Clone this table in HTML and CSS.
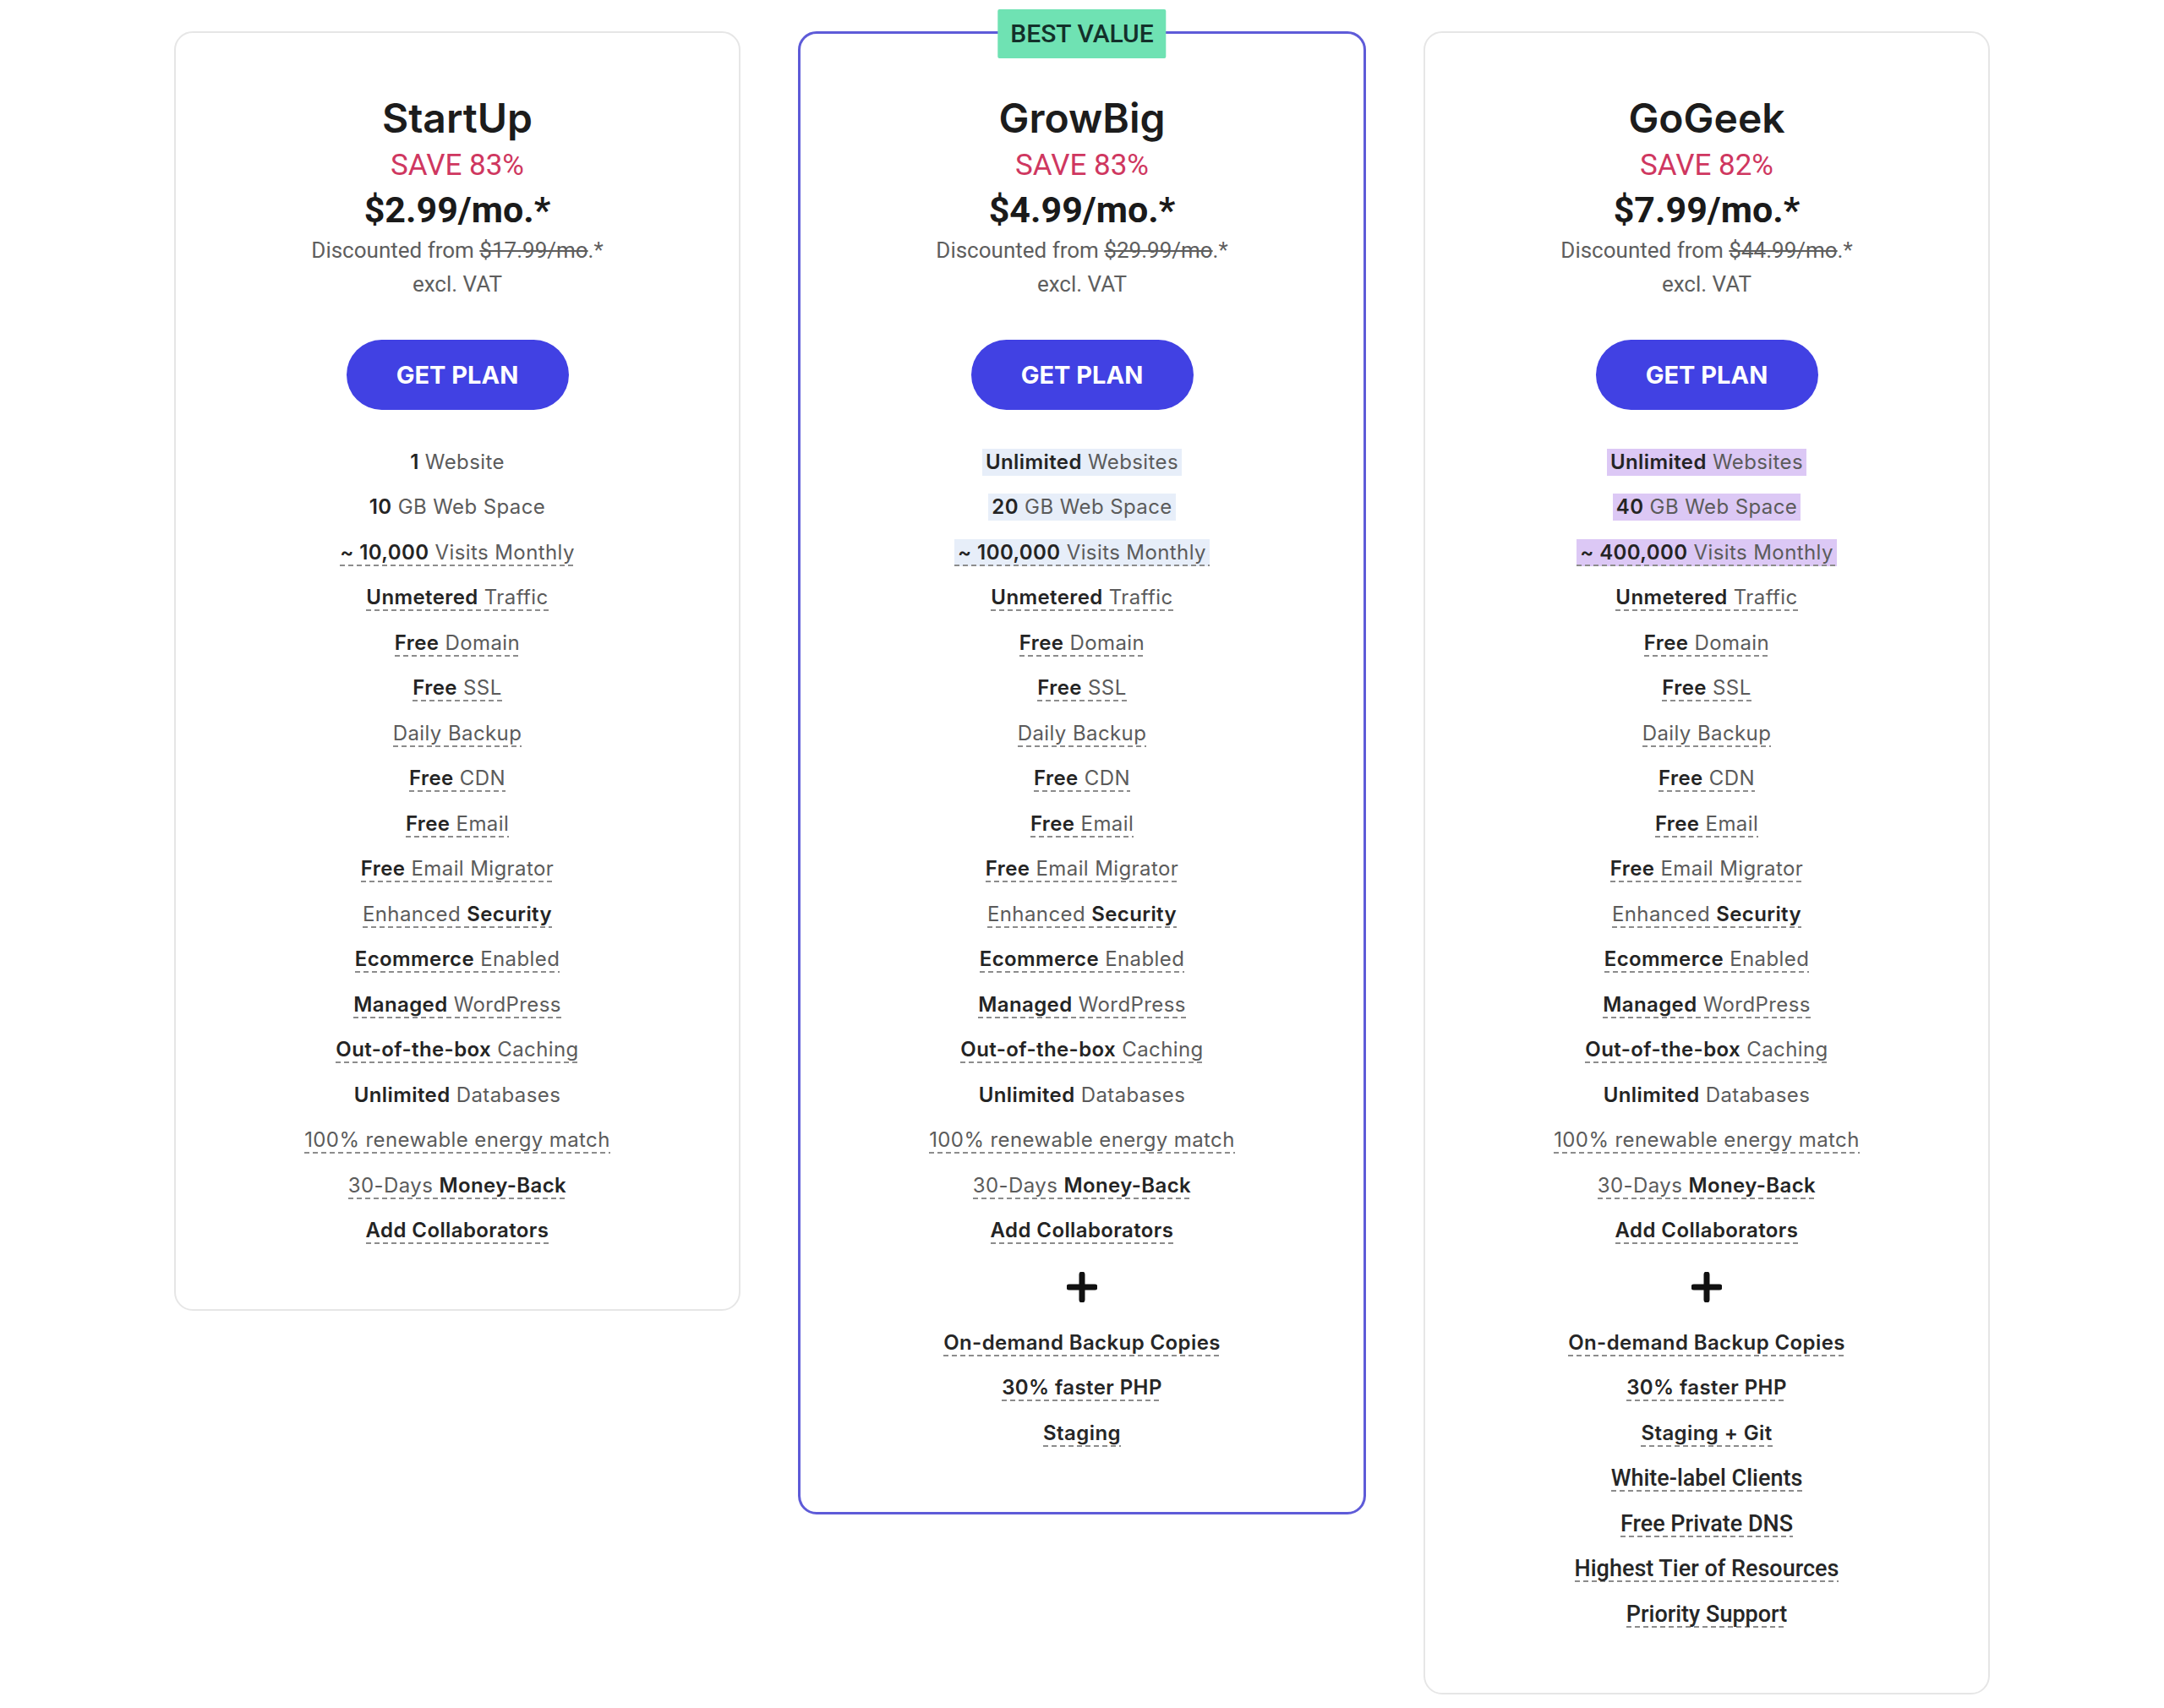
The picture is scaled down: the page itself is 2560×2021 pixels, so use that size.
FILE: index.html
```html
<!DOCTYPE html>
<html lang="en">
<head>
  <meta charset="UTF-8">
  <meta name="viewport" content="width=device-width, initial-scale=1.0">
  <title>Hosting plans</title>
  <link rel="stylesheet" href="styles.css">
</head>
<body>
  <div class="plans">

    <div class="plan">
      <h2 class="plan-name">StartUp</h2>
      <div class="save">SAVE 83%</div>
      <div class="price">$2.99/mo.*</div>
      <div class="from">Discounted from <s>$17.99/mo</s>.*</div>
      <div class="vat">excl. VAT</div>
      <a class="get-plan" href="#">GET PLAN</a>
      <ul class="features">
        <li><span><b>1</b> Website</span></li>
        <li><span><b>10</b> GB Web Space</span></li>
        <li><span class="tip"><b>~ 10,000</b> Visits Monthly</span></li>
        <li><span class="tip"><b>Unmetered</b> Traffic</span></li>
        <li><span class="tip"><b>Free</b> Domain</span></li>
        <li><span class="tip"><b>Free</b> SSL</span></li>
        <li><span class="tip">Daily Backup</span></li>
        <li><span class="tip"><b>Free</b> CDN</span></li>
        <li><span class="tip"><b>Free</b> Email</span></li>
        <li><span class="tip"><b>Free</b> Email Migrator</span></li>
        <li><span class="tip">Enhanced <b>Security</b></span></li>
        <li><span class="tip"><b>Ecommerce</b> Enabled</span></li>
        <li><span class="tip"><b>Managed</b> WordPress</span></li>
        <li><span class="tip"><b>Out-of-the-box</b> Caching</span></li>
        <li><span><b>Unlimited</b> Databases</span></li>
        <li><span class="tip">100% renewable energy match</span></li>
        <li><span class="tip">30-Days <b>Money-Back</b></span></li>
        <li><span class="tip"><b>Add Collaborators</b></span></li>
      </ul>
    </div>

    <div class="plan best">
      <div class="badge">BEST VALUE</div>
      <h2 class="plan-name">GrowBig</h2>
      <div class="save">SAVE 83%</div>
      <div class="price">$4.99/mo.*</div>
      <div class="from">Discounted from <s>$29.99/mo</s>.*</div>
      <div class="vat">excl. VAT</div>
      <a class="get-plan" href="#">GET PLAN</a>
      <ul class="features">
        <li><span class="hl blue"><b>Unlimited</b> Websites</span></li>
        <li><span class="hl blue"><b>20</b> GB Web Space</span></li>
        <li><span class="hl blue tip"><b>~ 100,000</b> Visits Monthly</span></li>
        <li><span class="tip"><b>Unmetered</b> Traffic</span></li>
        <li><span class="tip"><b>Free</b> Domain</span></li>
        <li><span class="tip"><b>Free</b> SSL</span></li>
        <li><span class="tip">Daily Backup</span></li>
        <li><span class="tip"><b>Free</b> CDN</span></li>
        <li><span class="tip"><b>Free</b> Email</span></li>
        <li><span class="tip"><b>Free</b> Email Migrator</span></li>
        <li><span class="tip">Enhanced <b>Security</b></span></li>
        <li><span class="tip"><b>Ecommerce</b> Enabled</span></li>
        <li><span class="tip"><b>Managed</b> WordPress</span></li>
        <li><span class="tip"><b>Out-of-the-box</b> Caching</span></li>
        <li><span><b>Unlimited</b> Databases</span></li>
        <li><span class="tip">100% renewable energy match</span></li>
        <li><span class="tip">30-Days <b>Money-Back</b></span></li>
        <li><span class="tip"><b>Add Collaborators</b></span></li>
      </ul>
      <div class="plus">
        <svg width="36" height="36" viewBox="0 0 36 36"><path d="M18 3v30M3 18h30" stroke="#111" stroke-width="7" stroke-linecap="round"/></svg>
      </div>
      <ul class="features extras">
        <li><span class="tip">On-demand Backup Copies</span></li>
        <li><span class="tip">30% faster PHP</span></li>
        <li><span class="tip">Staging</span></li>
      </ul>
    </div>

    <div class="plan">
      <h2 class="plan-name">GoGeek</h2>
      <div class="save">SAVE 82%</div>
      <div class="price">$7.99/mo.*</div>
      <div class="from">Discounted from <s>$44.99/mo</s>.*</div>
      <div class="vat">excl. VAT</div>
      <a class="get-plan" href="#">GET PLAN</a>
      <ul class="features">
        <li><span class="hl purple"><b>Unlimited</b> Websites</span></li>
        <li><span class="hl purple"><b>40</b> GB Web Space</span></li>
        <li><span class="hl purple tip"><b>~ 400,000</b> Visits Monthly</span></li>
        <li><span class="tip"><b>Unmetered</b> Traffic</span></li>
        <li><span class="tip"><b>Free</b> Domain</span></li>
        <li><span class="tip"><b>Free</b> SSL</span></li>
        <li><span class="tip">Daily Backup</span></li>
        <li><span class="tip"><b>Free</b> CDN</span></li>
        <li><span class="tip"><b>Free</b> Email</span></li>
        <li><span class="tip"><b>Free</b> Email Migrator</span></li>
        <li><span class="tip">Enhanced <b>Security</b></span></li>
        <li><span class="tip"><b>Ecommerce</b> Enabled</span></li>
        <li><span class="tip"><b>Managed</b> WordPress</span></li>
        <li><span class="tip"><b>Out-of-the-box</b> Caching</span></li>
        <li><span><b>Unlimited</b> Databases</span></li>
        <li><span class="tip">100% renewable energy match</span></li>
        <li><span class="tip">30-Days <b>Money-Back</b></span></li>
        <li><span class="tip"><b>Add Collaborators</b></span></li>
      </ul>
      <div class="plus">
        <svg width="36" height="36" viewBox="0 0 36 36"><path d="M18 3v30M3 18h30" stroke="#111" stroke-width="7" stroke-linecap="round"/></svg>
      </div>
      <ul class="features extras">
        <li><span class="tip">On-demand Backup Copies</span></li>
        <li><span class="tip">30% faster PHP</span></li>
        <li><span class="tip">Staging + Git</span></li>
        <li class="narrow"><span class="tip">White-label Clients</span></li>
        <li class="narrow"><span class="tip">Free Private DNS</span></li>
        <li class="narrow"><span class="tip">Highest Tier of Resources</span></li>
        <li class="narrow"><span class="tip">Priority Support</span></li>
      </ul>
    </div>

  </div>
</body>
</html>
```

FILE: styles.css
```css
body {
  margin: 0;
  background: #fff;
  font-family: 'Inter', 'Roboto', sans-serif;
  color: #222;
}
.plans {
  display: flex;
  align-items: flex-start;
  gap: 68px;
  padding: 37px 0 0 206px;
}
.plan {
  position: relative;
  box-sizing: border-box;
  width: 670px;
  padding: 73px 0 66px;
  border: 2px solid #e6e6e6;
  border-radius: 22px;
  text-align: center;
}
.plan.best {
  width: 672px;
  border: 3px solid #5e5bd8;
  padding-top: 72px;
}
.badge {
  position: absolute;
  top: -29px;
  left: 50%;
  transform: translateX(-50%);
  height: 58px;
  line-height: 58px;
  padding: 0 15px;
  background: #6fe2b3;
  border-radius: 2px;
  color: #13302a;
  font-family: 'Roboto', sans-serif;
  font-weight: 500;
  font-size: 30px;
  white-space: nowrap;
}
.plan-name {
  margin: 0;
  font-size: 48px;
  line-height: 56px;
  font-weight: 600;
  color: #1c1c1c;
}
.save {
  font-family: 'Roboto', sans-serif;
  font-weight: 400;
  font-size: 35px;
  line-height: 56px;
  color: #cf3760;
}
.price {
  font-family: 'Roboto', sans-serif;
  font-weight: 700;
  font-size: 43px;
  line-height: 48px;
  color: #1a1a1a;
}
.from,
.vat {
  font-family: 'Roboto', sans-serif;
  font-size: 26px;
  color: #5e5e5e;
}
.from {
  line-height: 48px;
}
.from s {
  text-decoration-thickness: 2px;
}
.vat {
  line-height: 32px;
}
.get-plan {
  display: block;
  width: 263px;
  height: 83px;
  margin: 50px auto 0;
  border-radius: 42px;
  background: #4141e3;
  color: #fff;
  text-decoration: none;
  font-weight: 700;
  font-size: 29px;
  line-height: 83px;
}
.features {
  list-style: none;
  margin: 35px 0 0;
  padding: 0;
}
.features li {
  height: 53.5px;
  display: flex;
  align-items: center;
  justify-content: center;
  font-size: 24px;
  letter-spacing: 0.4px;
  color: #5b5b5b;
}
.features span {
  line-height: 32px;
  white-space: nowrap;
}
.features b {
  font-weight: 600;
  color: #242424;
}
.tip {
  background: repeating-linear-gradient(to right, #8c8c8c 0 6px, transparent 6px 10px) left bottom / 100% 2px no-repeat;
}
.hl {
  padding: 0 4px;
}
.hl.blue {
  background-color: #e7eef9;
}
.hl.purple {
  background-color: #dcc8f5;
}
.plus {
  height: 79px;
  display: flex;
  align-items: center;
  justify-content: center;
}
.plus svg {
  display: block;
}
.extras {
  margin-top: 0;
}
.extras li {
  font-weight: 600;
  color: #262626;
}
.extras li.narrow {
  font-family: 'Roboto', sans-serif;
  font-weight: 500;
  font-size: 27px;
  letter-spacing: 0;
}
```
